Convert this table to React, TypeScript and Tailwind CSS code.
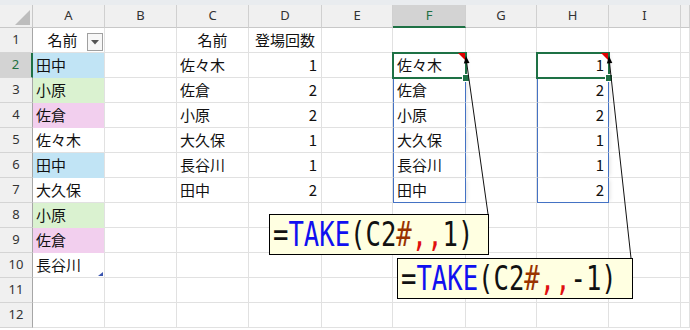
type Cell = {
  t?: string
  num?: boolean
  center?: boolean
  bg?: string
  filter?: boolean
  mark?: boolean
  spill?: "top" | "mid" | "bottom"
  active?: boolean
}

const cols = [
  { id: "A", w: "w-[72px]" },
  { id: "B", w: "w-[72px]" },
  { id: "C", w: "w-[72px]" },
  { id: "D", w: "w-[73px]" },
  { id: "E", w: "w-[71px]" },
  { id: "F", w: "w-[73px]" },
  { id: "G", w: "w-[71px]" },
  { id: "H", w: "w-[72px]" },
  { id: "I", w: "w-[72px]" },
  { id: "J", w: "w-[9px]" },
]

const blue = "bg-[#c1e4f5]"
const green = "bg-[#daf2d0]"
const pink = "bg-[#f2cfee]"

const names = ["佐々木", "佐倉", "小原", "大久保", "長谷川", "田中"]
const counts = ["1", "2", "2", "1", "1", "2"]
const colA: Cell[] = [
  { t: "田中", bg: blue },
  { t: "小原", bg: green },
  { t: "佐倉", bg: pink },
  { t: "佐々木" },
  { t: "田中", bg: blue },
  { t: "大久保" },
  { t: "小原", bg: green },
  { t: "佐倉", bg: pink },
  { t: "長谷川", mark: true },
]

const rows: Record<string, Cell>[] = Array.from({ length: 12 }, (_, i) => {
  const r = i + 1
  const row: Record<string, Cell> = {}
  if (r === 1) {
    row.A = { t: "名前", center: true, filter: true }
    row.C = { t: "名前", center: true }
    row.D = { t: "登場回数", center: true }
  } else if (r <= 10) {
    row.A = colA[r - 2]
  }
  if (r >= 2 && r <= 7) {
    const spill = r === 2 ? "top" : r === 7 ? "bottom" : "mid"
    row.C = { t: names[r - 2] }
    row.D = { t: counts[r - 2], num: true }
    row.F = { t: names[r - 2], spill, active: r === 2 }
    row.H = { t: counts[r - 2], num: true, spill, active: r === 2 }
  }
  return row
})

function Formula({ last }: { last: string }) {
  return (
    <span className="inline-block origin-left scale-x-[0.8] scale-y-[1.04] whitespace-pre font-['DejaVu_Sans_Mono',monospace] text-[32px] leading-none text-[#111]">
      =<span className="text-[#1010f0]">TAKE</span>(C2<span className="text-[#993300]">#</span>
      <span className="text-[#e01010]">,,</span>
      {last})
    </span>
  )
}

function cellClass(cell: Cell) {
  const cls: string[] = []
  if (cell.bg) cls.push(cell.bg)
  // right edge
  cls.push(cell.spill ? "border-r-[#4472c4]" : "border-r-[#e1e1e1]")
  // left edge (spill range only)
  if (cell.spill) cls.push("border-l border-l-[#4472c4] shadow-[3px_0_4px_-2px_rgba(0,0,0,0.12)]")
  // bottom edge
  if (cell.spill === "bottom") cls.push("border-b-[#4472c4]")
  else if (cell.bg) cls.push("border-b-transparent")
  else cls.push("border-b-[#e1e1e1]")
  if (cell.num) cls.push("justify-end pr-[4px]")
  else if (cell.center) cls.push("justify-center")
  if (cell.active) cls.push("z-10 outline-2 outline-[#1e7145] -outline-offset-1")
  return cls.join(" ")
}

export default function App() {
  return (
    <div className="relative w-[690px] h-[330px] overflow-hidden bg-white font-['Noto_Sans_CJK_JP','Noto_Sans',sans-serif] text-[#111]">
      <div className="h-[5px] bg-[#e9ecef]" />

      {/* column headers */}
      <div className="flex h-[23px] text-[13px] text-[#333] font-['Noto_Sans',sans-serif]">
        <div className="w-[33px] shrink-0 bg-[#f0f0f0] border-r border-b border-[#c8c8c8]">
          <svg width="33" height="23" viewBox="0 0 33 23">
            <polygon points="30,5 30,20 15,20" fill="#bdbdbd" />
          </svg>
        </div>
        {cols.map((c) => (
          <div
            key={c.id}
            className={`${c.w} shrink-0 flex justify-center pt-[1px] border-r border-r-[#d0d0d0] ${
              c.id === "F"
                ? "bg-[#d3d3d3] border-b-2 border-b-[#1e7145] text-[#1e6f42]"
                : "bg-[#f0f0f0] border-b border-b-[#c8c8c8]"
            }`}
          >
            {c.id === "J" ? "" : c.id}
          </div>
        ))}
      </div>

      {/* rows */}
      {rows.map((row, i) => {
        const r = i + 1
        const sel = r === 2
        return (
          <div key={r} className="flex h-[25px]">
            <div
              className={`w-[33px] shrink-0 flex items-center justify-center border-b border-b-[#d4d4d4] text-[13px] font-['Noto_Sans',sans-serif] ${
                sel
                  ? "bg-[#d3d3d3] text-[#1e6f42] border-r-2 border-r-[#1e7145]"
                  : "bg-[#f0f0f0] text-[#333] border-r border-r-[#a6a6a6]"
              }`}
            >
              {r}
            </div>
            {cols.map((c) => {
              const cell = row[c.id] || {}
              return (
                <div
                  key={c.id}
                  className={`${c.w} relative shrink-0 flex items-center px-[3px] text-[15px] border-r border-b ${cellClass(cell)}`}
                >
                  <span className={cell.filter ? "mr-[12px]" : ""}>{cell.t}</span>
                  {cell.filter && (
                    <div className="absolute right-[1px] top-[5px] w-[16px] h-[18px] bg-[#f7f7f7] border border-[#a0a0a0] flex items-center justify-center">
                      <svg width="8" height="5" viewBox="0 0 8 5">
                        <polygon points="0,0 8,0 4,4.5" fill="#555" />
                      </svg>
                    </div>
                  )}
                  {cell.mark && (
                    <svg className="absolute right-[1px] bottom-[1px]" width="5" height="4" viewBox="0 0 5 4">
                      <polygon points="5,0 5,4 0,4" fill="#3a55b0" />
                    </svg>
                  )}
                  {cell.active && (
                    <>
                      <svg className="absolute right-0 top-0" width="7" height="7" viewBox="0 0 7 7">
                        <polygon points="0,0 7,0 7,7" fill="#e00000" />
                      </svg>
                      <div className="absolute -right-[4px] -bottom-[4px] w-[6px] h-[6px] bg-[#1e7145] outline outline-1 outline-white" />
                    </>
                  )}
                </div>
              )
            })}
          </div>
        )
      })}

      {/* callout arrows */}
      <svg className="absolute left-0 top-0 z-20" width="690" height="330" viewBox="0 0 690 330">
        <line x1="466" y1="58" x2="488" y2="214" stroke="#111" strokeWidth="1" />
        <line x1="609" y1="58" x2="631" y2="258" stroke="#111" strokeWidth="1" />
        <polygon points="466,56 469.5,63 463.8,63.6" fill="#000" />
        <polygon points="609,56 612.3,63 606.8,63.5" fill="#000" />
      </svg>

      {/* callouts */}
      <div className="absolute left-[269px] top-[214px] z-20 w-[220px] h-[41px] bg-[#ffffe1] border border-black flex items-center pl-[3px] overflow-hidden">
        <Formula last="1" />
      </div>
      <div className="absolute left-[397px] top-[258px] z-20 w-[236px] h-[41px] bg-[#ffffe1] border border-black flex items-center pl-[3px] overflow-hidden">
        <Formula last="-1" />
      </div>
    </div>
  )
}
